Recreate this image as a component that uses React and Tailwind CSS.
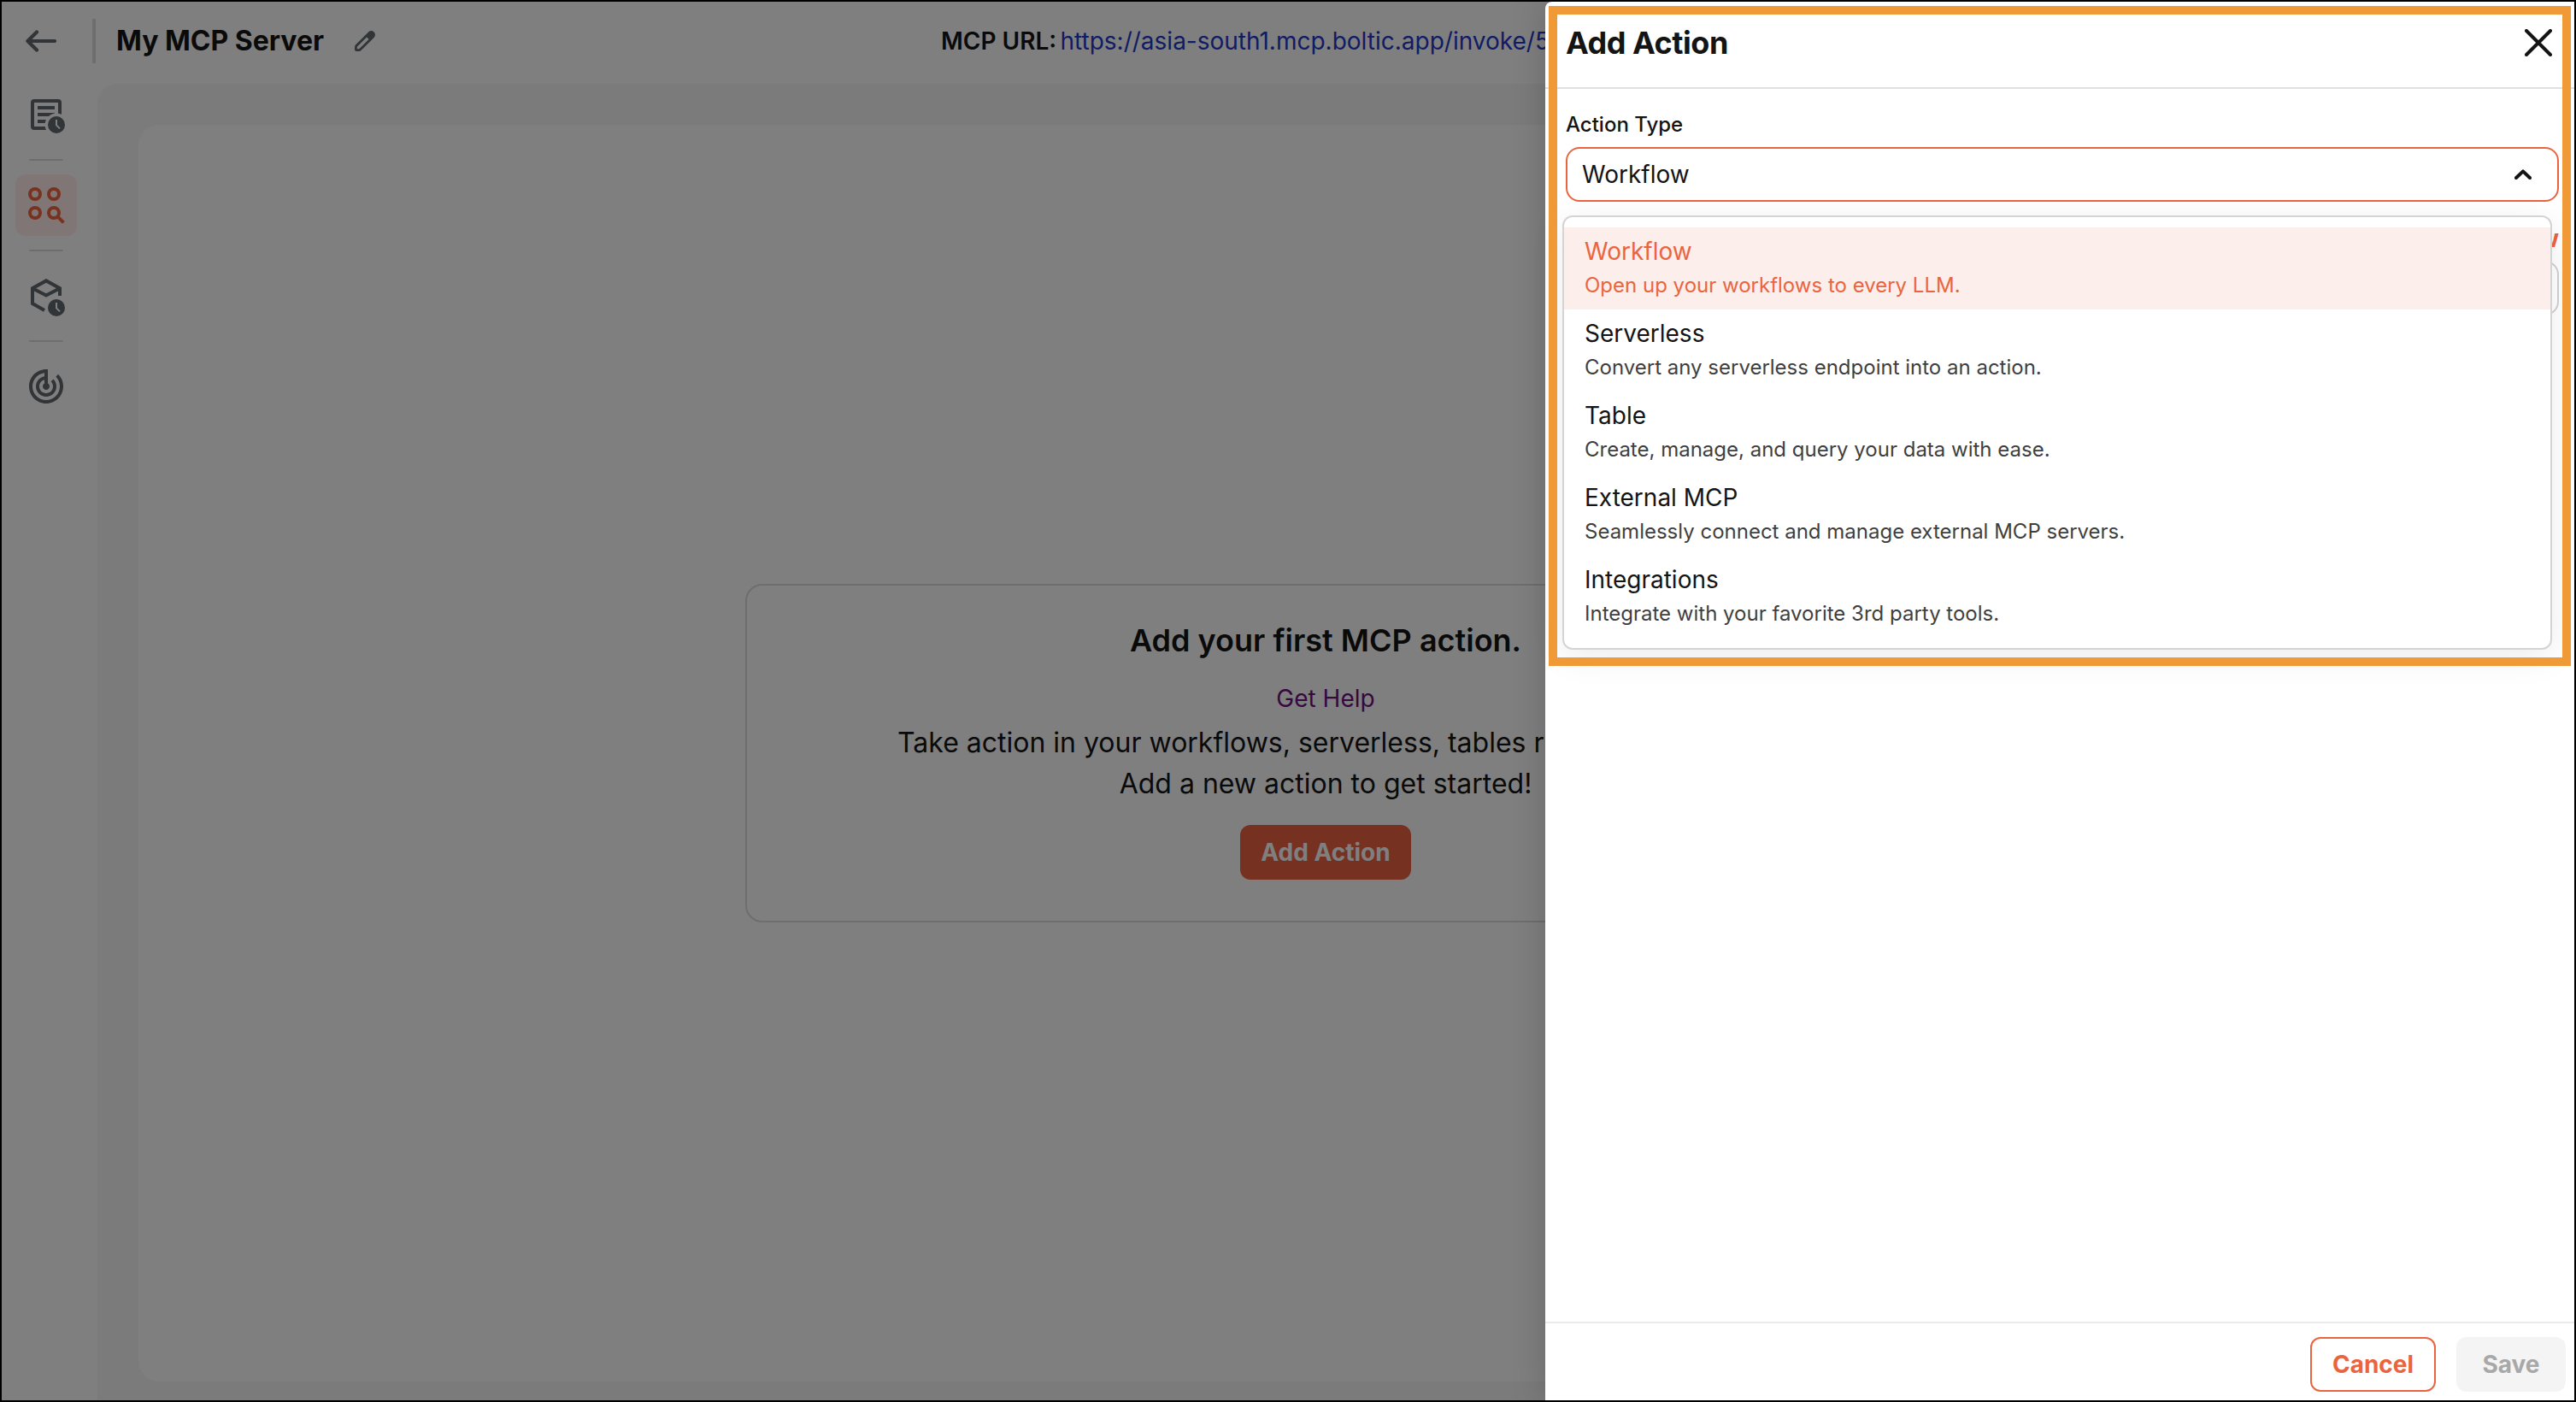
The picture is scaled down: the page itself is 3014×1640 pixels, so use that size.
import React from 'react';

const OPTIONS = [
  { title: 'Workflow', text: 'Open up your workflows to every LLM.' },
  { title: 'Serverless', text: 'Convert any serverless endpoint into an action.' },
  { title: 'Table', text: 'Create, manage, and query your data with ease.' },
  { title: 'External MCP', text: 'Seamlessly connect and manage external MCP servers.' },
  { title: 'Integrations', text: 'Integrate with your favorite 3rd party tools.' },
];

function BackIcon() {
  return (
    <svg className="h-[26px] w-9" viewBox="0 0 36 26" fill="none" stroke="#626a70" strokeWidth="4.2" strokeLinecap="round" strokeLinejoin="round">
      <path d="M34 13H3M13 2.4 2.4 13 13 23.6" />
    </svg>
  );
}

function PencilIcon() {
  return (
    <svg className="h-6 w-6" viewBox="0 0 24 24" fill="#626a70">
      <path fillRule="evenodd" d="M22.6 1.4a4.6 4.6 0 0 0-6.5 0L1.2 16.3a4 4 0 0 0-1.2 2.8V22a2 2 0 0 0 2 2h2.900a4 4 0 0 0 2.800-1.200L22.600 7.900a4.600 4.600 0 0 0 0-6.500ZM5.700 20.700a1.600 1.600 0 0 1-1.100.500H2.800v-1.900c0-.4.200-.8.500-1.100L14.100 7.400l2.500 2.500Z" />
    </svg>
  );
}

function Clock({ cy }) {
  return (
    <>
      <circle cx="18" cy={cy} r="5" fill="#626a70" />
      <path d={`M18 ${cy - 3}v3.200l2 2`} fill="none" stroke="#ffffff" strokeWidth="1" />
    </>
  );
}

function LogsIcon() {
  return (
    <svg className="size-12" viewBox="0 0 24 24">
      <rect x="4" y="4" width="16" height="16" rx="1" fill="none" stroke="#626a70" strokeWidth="2" />
      <path d="M7 8h10M7 12h10M7 16h10" stroke="#626a70" strokeWidth="2" />
      <circle cx="18" cy="18" r="6.700" fill="#ffffff" />
      <Clock cy={18} />
    </svg>
  );
}

function ActionsIcon() {
  return (
    <svg className="size-12" viewBox="0 0 24 24" fill="none" stroke="#f06440" strokeWidth="2">
      <circle cx="5.500" cy="5.500" r="3" />
      <circle cx="16.500" cy="5.500" r="3" />
      <circle cx="5.500" cy="16.500" r="3" />
      <circle cx="16.500" cy="16.500" r="3" />
      <path d="m18.700 18.700 3.500 3.500" />
    </svg>
  );
}

function PackageIcon() {
  return (
    <svg className="size-12" viewBox="0 0 24 24">
      <path d="M20 12V7.600L12 3.200 4 7.600v8.900l7 4M4 7.600l8 4.200 8-4.200" fill="none" stroke="#626a70" strokeWidth="2" />
      <Clock cy={19} />
    </svg>
  );
}

function RadarIcon() {
  return (
    <svg className="size-12" viewBox="0 0 24 24" fill="#626a70">
      <path d="M19.070 4.930l-1.410 1.410C19.100 7.790 20 9.790 20 12c0 4.420-3.580 8-8 8s-8-3.580-8-8c0-4.080 3.050-7.440 7-7.930v2.020C8.160 6.570 6 9.030 6 12c0 3.310 2.690 6 6 6s6-2.690 6-6c0-1.660-.67-3.160-1.760-4.240l-1.410 1.410C15.550 9.900 16 10.900 16 12c0 2.210-1.790 4-4 4s-4-1.790-4-4c0-1.860 1.280-3.410 3-3.860v2.140c-.6.350-1 .98-1 1.720 0 1.100.9 2 2 2s2-.9 2-2c0-.74-.4-1.380-1-1.720V2h-1C6.480 2 2 6.480 2 12s4.480 10 10 10 10-4.480 10-10c0-2.760-1.120-5.260-2.930-7.070z" />
    </svg>
  );
}

function Separator() {
  return <div className="h-0.5 w-10 rounded-full bg-[#dcdcdc]" />;
}

function Page() {
  return (
    <div className="flex h-full w-full flex-col bg-white">
      <header className="mb-1 flex h-[92px] shrink-0 items-center">
        <div className="flex w-[106px] pl-7"><BackIcon /></div>
        <div className="h-[52px] w-1 bg-[#dcdcdc]" />
        <h1 className="ml-6 w-[279px] text-[32px] font-bold">My MCP Server</h1>
        <PencilIcon />
        <div className="ml-[662px] flex whitespace-nowrap text-[28px]">
          <span className="w-[139.500px] font-semibold">MCP URL:</span>
          <a className="text-[#2238c8]">https://asia-south1.mcp.boltic.app/invoke/5</a>
        </div>
      </header>
      <div className="flex grow">
        <nav className="flex w-28 flex-col items-center pr-2">
          <div className="flex size-[72px] items-center justify-center"><LogsIcon /></div>
          <div className="py-4"><Separator /></div>
          <div className="flex size-[72px] items-center justify-center rounded-xl bg-[#ffedea]"><ActionsIcon /></div>
          <div className="py-4"><Separator /></div>
          <div className="flex h-[88px] items-start justify-center pt-3"><PackageIcon /></div>
          <div className="pb-4"><Separator /></div>
          <div className="flex size-[72px] items-center justify-center"><RadarIcon /></div>
        </nav>
        <main className="flex grow rounded-tl-3xl bg-[#f6f6f6] pt-12 pr-[72px] pb-[22px] pl-12">
          <div className="flex grow items-center justify-center rounded-3xl bg-white">
            <section className="flex h-[396px] w-[1358px] flex-col items-center rounded-[20px] border-2 border-[#dcdcdc] pt-10">
              <h2 className="text-[36px] leading-12 font-semibold">Add your first MCP action.</h2>
              <a className="mt-6 text-[28px] leading-10 text-[#6f1180]">Get Help</a>
              <p className="mt-2 w-[1002px] text-[32px] leading-12 whitespace-nowrap">Take action in your workflows, serverless, tables r</p>
              <p className="text-[32px] leading-12">Add a new action to get started!</p>
              <button className="mt-6 h-16 w-[200px] rounded-xl bg-[#ec6342] text-[28px] font-bold text-white">Add Action</button>
            </section>
          </div>
        </main>
      </div>
    </div>
  );
}

function Dropdown() {
  return (
    <ul className="absolute top-[78px] -left-1.5 w-[1158px] rounded-xl border-2 border-[#d4d4d4] bg-white py-3 shadow-[0_8px_40px_rgba(0,0,0,0.08)]">
      {OPTIONS.map((option, i) => (
        <li key={option.title} className={i === 0 ? 'h-24 bg-[#fceeea] px-6 pt-2 text-[#eb6440]' : 'h-24 px-6 pt-2'}>
          <div className="text-[28px] leading-10">{option.title}</div>
          <div className={i === 0 ? 'text-[24px] leading-10' : 'text-[24px] leading-10 text-[#3f3f3f]'}>{option.text}</div>
        </li>
      ))}
    </ul>
  );
}

function ActionTypeSelect() {
  return (
    <div className="relative mt-2.5 flex h-16 items-center justify-between rounded-2xl border-2 border-[#eb6440] pr-[30px] pl-[17px]">
      <span className="text-[28px]">Workflow</span>
      <svg className="h-3 w-5" viewBox="0 0 20 12" fill="none" stroke="#141414" strokeWidth="4" strokeLinecap="round" strokeLinejoin="round">
        <path d="m2 10 8-7.600 8 7.600" />
      </svg>
      <Dropdown />
    </div>
  );
}

function Panel() {
  return (
    <aside className="absolute inset-y-0 right-0 flex w-[1204px] flex-col rounded-tl-lg bg-white shadow-[0_0_40px_rgba(0,0,0,0.18)]">
      <header className="flex h-[102px] shrink-0 items-center justify-between border-b-2 border-[#e0e0e0] pr-[26px] pb-1 pl-6">
        <h2 className="text-[36px] font-bold tracking-[-0.48px]">Add Action</h2>
        <svg className="size-8" viewBox="0 0 32 32" fill="none" stroke="#141414" strokeWidth="4" strokeLinecap="round">
          <path d="M2 2 30 30M30 2 2 30" />
        </svg>
      </header>
      <div className="flex grow flex-col pt-[26px] pr-[18px] pl-6">
        <label className="text-[24px] leading-8 font-medium">Action Type</label>
        <ActionTypeSelect />
        <div className="mt-[27px] text-right text-[28px] leading-8 font-bold text-[#eb6440]">w</div>
        <div className="mt-2.5 h-16 rounded-2xl border-2 border-[#d0d0d0]" />
      </div>
      <footer className="flex h-[92px] shrink-0 items-start justify-end gap-6 border-t-2 border-[#ebebeb] pt-4 pr-2.5 text-[28px] font-bold">
        <button className="h-16 w-[147px] rounded-xl border-2 border-[#eb6440] text-[#eb6440]">Cancel</button>
        <button className="h-16 w-32 rounded-xl bg-[#f4f4f4] text-[#a8a8a8]">Save</button>
      </footer>
      <div className="pointer-events-none absolute top-[5px] right-1 left-1 h-[772px] border-10 border-[#f09937]" />
    </aside>
  );
}

export default function App() {
  return (
    <div className="relative h-[1640px] w-[3014px] overflow-hidden border-2 border-black font-['Inter',sans-serif] text-[#141414]">
      <Page />
      <div className="absolute inset-0 bg-black/50" />
      <Panel />
    </div>
  );
}
